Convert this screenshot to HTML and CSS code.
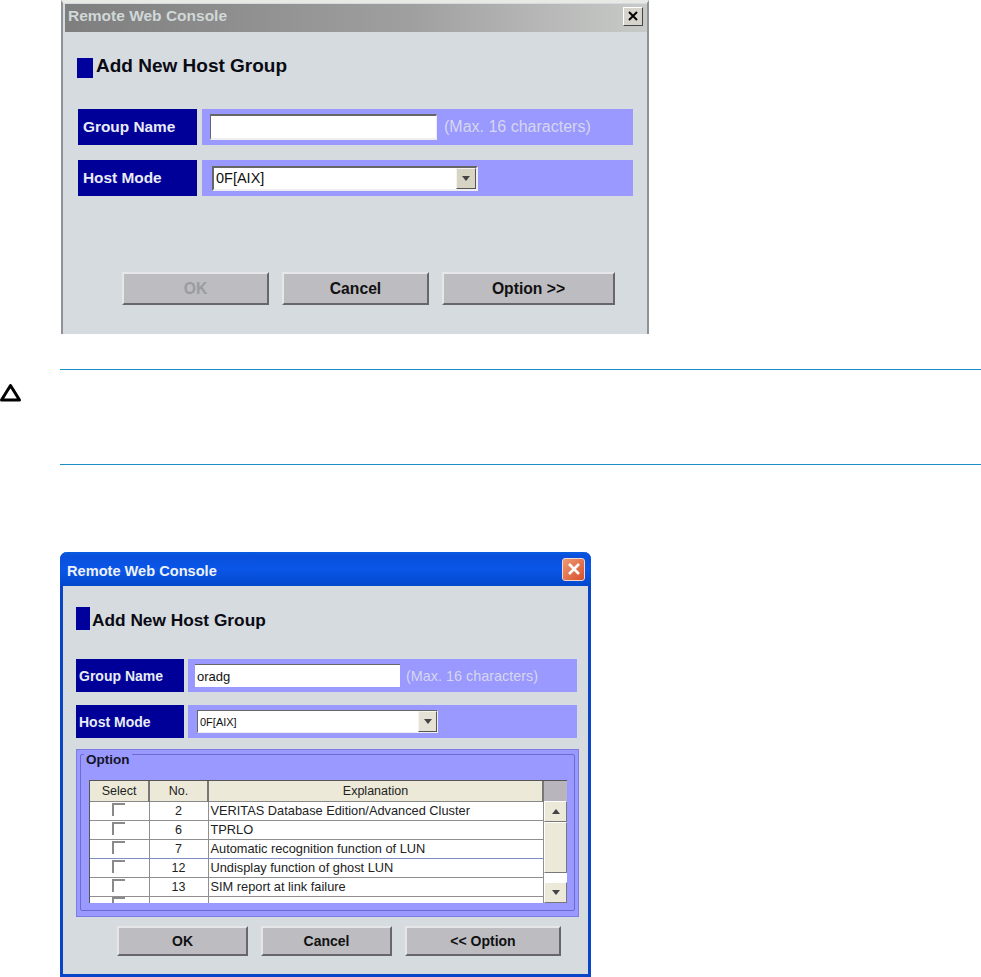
FILE: index.html
```html
<!DOCTYPE html>
<html lang="en">
<head>
<meta charset="utf-8">
<title>Remote Web Console</title>
<link rel="stylesheet" href="styles.css">
</head>
<body>
<section class="dialog classic">
  <header class="titlebar">
    <span class="title">Remote Web Console</span>
    <span class="close" aria-label="Close"><svg viewBox="0 0 12 12" width="12" height="12"><path d="M2 2 L10 10 M10 2 L2 10" stroke="#000" stroke-width="2" fill="none"/></svg></span>
  </header>
  <h1 class="heading"><span class="mark"></span><span class="heading-text">Add New Host Group</span></h1>
  <div class="row first">
    <div class="label">Group Name</div>
    <div class="band"><div class="input"></div><span class="hint">(Max. 16 characters)</span></div>
  </div>
  <div class="row second">
    <div class="label">Host Mode</div>
    <div class="band"><div class="select"><span class="value">0F[AIX]</span><span class="drop"><i class="arrow-down"></i></span></div></div>
  </div>
  <div class="buttons">
    <button class="btn ok disabled">OK</button>
    <button class="btn cancel">Cancel</button>
    <button class="btn option">Option &gt;&gt;</button>
  </div>
</section>

<section class="caution">
  <div class="caution-icon"><svg viewBox="0 0 22 19" width="22" height="19"><path d="M10.5 2.5 L19.5 17 H1.5 Z" fill="#fff" stroke="#000" stroke-width="3" stroke-linejoin="round"/></svg></div>
  <div class="caution-box"></div>
</section>

<section class="dialog xp">
  <header class="titlebar">
    <span class="title">Remote Web Console</span>
    <span class="close" aria-label="Close"><svg viewBox="0 0 14 14" width="14" height="14"><path d="M2 2 L12 12 M12 2 L2 12" stroke="#fff" stroke-width="2.6" fill="none"/></svg></span>
  </header>
  <h1 class="heading"><span class="mark"></span><span class="heading-text">Add New Host Group</span></h1>
  <div class="row first">
    <div class="label">Group Name</div>
    <div class="band"><div class="input"><span class="value">oradg</span></div><span class="hint">(Max. 16 characters)</span></div>
  </div>
  <div class="row second">
    <div class="label">Host Mode</div>
    <div class="band"><div class="select"><span class="value">0F[AIX]</span><span class="drop"><i class="arrow-down"></i></span></div></div>
  </div>
  <div class="panel">
    <div class="group">
      <span class="legend">Option</span>
      <div class="table-wrap">
        <table class="grid">
          <colgroup><col class="c-select"><col class="c-no"><col class="c-exp"></colgroup>
          <thead><tr><th>Select</th><th>No.</th><th>Explanation</th></tr></thead>
          <tbody>
            <tr><td class="ctr"><i class="check"></i></td><td class="ctr">2</td><td>VERITAS Database Edition/Advanced Cluster</td></tr>
            <tr><td class="ctr"><i class="check"></i></td><td class="ctr">6</td><td>TPRLO</td></tr>
            <tr class="focus"><td class="ctr"><i class="check"></i></td><td class="ctr">7</td><td>Automatic recognition function of LUN</td></tr>
            <tr><td class="ctr"><i class="check"></i></td><td class="ctr">12</td><td>Undisplay function of ghost LUN</td></tr>
            <tr><td class="ctr"><i class="check"></i></td><td class="ctr">13</td><td>SIM report at link failure</td></tr>
            <tr class="cut"><td class="ctr"><i class="check"></i></td><td></td><td></td></tr>
          </tbody>
        </table>
        <div class="scrollbar">
          <div class="corner"></div>
          <div class="sb-btn"><i class="arrow-up"></i></div>
          <div class="thumb"></div>
          <div class="track"></div>
          <div class="sb-btn"><i class="arrow-down"></i></div>
        </div>
      </div>
    </div>
  </div>
  <div class="buttons">
    <button class="btn ok">OK</button>
    <button class="btn cancel">Cancel</button>
    <button class="btn option">&lt;&lt; Option</button>
  </div>
</section>
</body>
</html>
```
FILE: styles.css
```css
* { box-sizing: border-box; }
html, body { margin: 0; padding: 0; background: #fff; }
body { width: 981px; height: 977px; overflow: hidden; font-family: "Liberation Sans", Arial, sans-serif; }

.dialog { display: flex; flex-direction: column; background: #d5dbde; }
.titlebar { display: flex; align-items: center; justify-content: space-between; font-weight: 700; }
.close { display: flex; align-items: center; justify-content: center; }
.heading { display: flex; align-items: center; margin: 0; font-weight: 700; color: #0a0a14; }
.mark { display: block; background: #00009c; }
.row { display: flex; }
.label { display: flex; align-items: center; background: #000099; color: #e8ecf4; font-weight: 700; }
.band { flex: none; display: flex; align-items: center; background: #9999ff; }
.input, .select { display: flex; align-items: center; background: #fff; border-style: solid; border-color: #666 #eee #eee #666; color: #111; }
.hint { color: #d6d6ee; }
.select { justify-content: space-between; }
.value { font-family: "Liberation Sans", Arial, sans-serif; }
.drop { display: flex; align-items: center; justify-content: center; height: 100%; background: #d8d4c4; border: 1px solid; border-color: #f4f4f0 #555 #555 #f4f4f0; }
.arrow-down { display: block; width: 0; height: 0; border: 4px solid transparent; border-top: 5px solid #444; border-bottom: 0; }
.arrow-up { display: block; width: 0; height: 0; border: 4px solid transparent; border-bottom: 5px solid #444; border-top: 0; }
.buttons { display: flex; }
.btn { flex: none; padding: 0; font-family: inherit; font-weight: 700; color: #111; background: #bdbcc1; border: 2px solid; border-color: #e6e6e8 #66666c #66666c #e6e6e8; }
.btn.disabled { color: #9a9c9f; }

/* Classic gray dialog */
.classic { width: 588px; height: 334px; margin-left: 61px; border-left: 2px solid #8e9294; border-right: 2px solid #8e9294; border-top: 3px solid #e8e8e4; }
.classic .titlebar { height: 28px; margin: 1px 0 0 2px; padding: 0 4px 4px 3px; background: linear-gradient(to right, #7e7e7e, #a0a0a0 60%, #c8cac8); color: #d0d8d8; font-size: 15.5px; }
.classic .close { width: 20px; height: 19px; background: #d6d4cc; border: 1px solid; border-color: #fff #444 #444 #fff; }
.classic .heading { margin: 26px 0 0 14px; height: 20px; font-size: 19px; gap: 3px; }
.classic .heading-text { margin-top: -5px; }
.classic .mark { width: 16px; height: 20px; }
.classic .row { margin-left: 15px; gap: 5px; height: 36px; }
.classic .row.first { margin-top: 31px; }
.classic .row.second { margin-top: 15px; }
.classic .label { width: 119px; padding-left: 5px; font-size: 15.4px; }
.classic .band { width: 431px; padding-left: 8px; }
.classic .input { width: 227px; height: 26px; border-width: 2px 1px 2px 1px; }
.classic .hint { margin-left: 7px; font-size: 16px; }
.classic .select { width: 266px; height: 25px; margin-left: 2px; border-width: 2px; padding-left: 2px; font-size: 14.5px; }
.classic .drop { width: 20px; }
.classic .buttons { margin: 76px 0 0 59px; gap: 13px; }
.classic .btn { width: 147px; height: 33px; font-size: 15.7px; }
.classic .btn.option { width: 173px; }

/* XP blue dialog */
.xp { width: 531px; height: 425px; margin-left: 60px; margin-top: 87px; border: 3px solid #0a44c8; border-top: 0; border-radius: 7px 7px 0 0; }
.xp .titlebar { height: 34px; margin: 0 -3px; padding: 0 6px 0 7px; border-radius: 7px 7px 0 0; background: linear-gradient(to bottom, #0a5ce0, #0a50dc 12%, #0a56e8 50%, #0248cc); color: #eef2fa; font-size: 14.6px; }
.xp .title { margin-top: 3px; }
.xp .close { width: 23px; height: 23px; border-radius: 3px; border: 1px solid #f0d8cc; background: linear-gradient(135deg, #ee9a74, #d8502c); }
.xp .heading { margin: 21px 0 0 13px; height: 23px; font-size: 17.3px; gap: 2px; }
.xp .heading-text { margin-top: 3px; }
.xp .mark { width: 14px; height: 23px; }
.xp .row { margin-left: 13px; gap: 4px; height: 33px; }
.xp .row.first { margin-top: 29px; }
.xp .row.second { margin-top: 13px; }
.xp .label { width: 108px; padding-left: 3px; font-size: 14px; }
.xp .band { width: 389px; padding-left: 7px; }
.xp .input { width: 205px; height: 23px; border-width: 1px 0 0 0; padding-left: 2px; font-size: 13px; }
.xp .hint { margin-left: 6px; font-size: 14.4px; }
.xp .select { width: 241px; height: 23px; margin-left: 2px; border-width: 1px; padding-left: 2px; font-size: 11px; }
.xp .drop { width: 19px; background: #e4e2d4; }

.panel { width: 503px; height: 168px; margin: 11px 0 0 13px; padding: 4px 3px 5px; background: #9999ff; border: 1px solid #7d7de0; }
.group { position: relative; height: 100%; padding: 25px 8px 0 8px; border: 1px solid #6a6ad0; border-radius: 2px; }
.legend { position: absolute; top: -3px; left: 3px; padding: 0 2px; background: #9999ff; font-size: 13.5px; font-weight: 700; color: #141428; line-height: 15px; }
.table-wrap { display: flex; width: 478px; height: 123px; background: #fff; border-top: 1px solid #555; border-left: 1px solid #555; overflow: hidden; }
.grid { width: 454px; table-layout: fixed; border-collapse: collapse; font-size: 12.8px; color: #222; }
.c-select { width: 59px; }
.c-no { width: 59px; }
.grid th { height: 20px; padding: 0; font-weight: 400; font-size: 12.5px; background: #ece9d8; border-right: 2px solid #777; border-bottom: 1px solid #888; }
.grid td { height: 19px; padding: 0 0 0 2px; border-bottom: 1px solid #8f8f8f; border-right: 1px solid #8f8f8f; white-space: nowrap; }
.grid td.ctr { padding: 0; text-align: center; font-size: 12.5px; }
.grid .focus td { border-bottom-color: #7f8fc0; }
.grid .cut td { height: 7px; border-bottom: 0; line-height: 0; vertical-align: top; }
.check { display: inline-block; width: 13px; height: 13px; margin: 0 2px 2px 0; border-top: 2px solid #8a8a8a; border-left: 2px solid #8a8a8a; vertical-align: middle; }
.scrollbar { flex: none; width: 23px; display: flex; flex-direction: column; }
.corner { height: 20px; background: #b8b6bc; }
.sb-btn { display: flex; align-items: center; justify-content: center; height: 21px; background: #ece9d8; border: 1px solid; border-color: #fff #777 #777 #fff; }
.thumb { height: 51px; background: #ece9d8; border: 1px solid; border-color: #fff #777 #777 #fff; }
.track { height: 9px; background: #fff; }

.xp .buttons { margin: 9px 0 0 54px; gap: 13px; }
.xp .btn { width: 131px; height: 30px; font-size: 14px; }
.xp .btn.option { width: 156px; }

/* Caution note */
.caution { display: flex; margin-top: 35px; }
.caution-icon { flex: none; width: 60px; padding-top: 14px; line-height: 0; }
.caution-box { flex: none; width: 921px; height: 96px; border-top: 1px solid #1a8fc4; border-bottom: 1px solid #1a8fc4; }
```
